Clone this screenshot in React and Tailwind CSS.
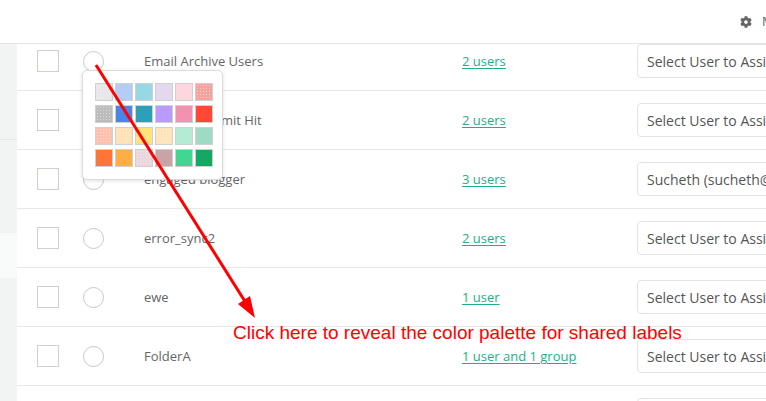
import React from "react";
import { FaCog } from "react-icons/fa";

const dots =
  "bg-[radial-gradient(circle,rgba(255,255,255,0.45)_0.5px,transparent_0.8px)] bg-[length:3px_3px]";

const swatches = [
  "bg-[#e7e7e9]", "bg-[#b3cdf5]", "bg-[#98d7e4]", "bg-[#e4d8f0]", "bg-[#fdd6e0]", "bg-[#f2a59c]",
  "bg-[#bcbcbc]", "bg-[#4a86e8]", "bg-[#2aa1b8]", "bg-[#b99bff]", "bg-[#f690b1]", "bg-[#ff4936]",
  "bg-[#ffc1ad]", "bg-[#ffe1b3]", "bg-[#ffe37c]", "bg-[#ffe4b9]", "bg-[#b3ebd5]", "bg-[#9fdbc3]",
  "bg-[#ff7537]", "bg-[#ffad47]", "bg-[#ebd6de]", "bg-[#c9a4a7]", "bg-[#43d692]", "bg-[#16a765]",
];
const dotted = new Set([0, 5, 6, 12, 13, 15, 20]);

const rows = [
  { label: "Email Archive Users", link: "2 users", select: "Select User to Assign" },
  { label: "Daily Send Limit Hit", link: "2 users", select: "Select User to Assign" },
  { label: "engaged blogger", link: "3 users", select: "Sucheth (sucheth@example.com)" },
  { label: "error_sync2", link: "2 users", select: "Select User to Assign" },
  { label: "ewe", link: "1 user", select: "Select User to Assign" },
  { label: "FolderA", link: "1 user and 1 group", select: "Select User to Assign" },
  { label: "Folder B", link: "1 user", select: "Select User to Assign" },
];

function Row({ r }) {
  return (
    <div className="flex h-[59px] shrink-0 items-center border-b border-[#e8e8e8]">
      <div className="ml-[20px] h-[22px] w-[22px] shrink-0 border border-[#d3cec9] bg-white" />
      <div className="ml-[24px] h-[21px] w-[21px] shrink-0 rounded-full border border-[#c8c8c8] bg-white" />
      <div className="ml-[40px] w-[318px] shrink-0 translate-y-[1px] whitespace-nowrap text-[13px] text-[#666]">
        {r.label}
      </div>
      <div className="w-[175px] shrink-0 translate-y-[1px] whitespace-nowrap text-[13px] text-[#1dae8a] underline underline-offset-2">
        {r.link}
      </div>
      <div className="flex h-[34px] w-[220px] shrink-0 items-center rounded-[4px] border border-[#e3e3e3] bg-white pl-[9px] whitespace-nowrap text-[14px] text-[#555]">
        {r.select}
      </div>
    </div>
  );
}

export default function App() {
  return (
    <div
      className="relative h-[401px] w-[766px] overflow-hidden bg-white"
      style={{ fontFamily: '"Open Sans", "Noto Sans", sans-serif' }}
    >
      <div className="relative z-10 flex h-[44px] items-center overflow-hidden whitespace-nowrap border-b border-[#e6e6e6] bg-white pl-[740px]">
        <FaCog className="h-[12px] w-[12px] shrink-0 text-[#666]" />
        <span className="ml-[10px] text-[13px] text-[#666]">Manage Labels</span>
      </div>

      <div className="-mt-[12px] flex">
        <div className="flex w-[17px] shrink-0 flex-col bg-[#f2f4f4]">
          <div className="h-[108px] shrink-0 border-b border-[#e4e7e7]" />
          <div className="h-[93px] shrink-0" />
          <div className="h-[45px] shrink-0 bg-[#f9fafa]" />
          <div className="h-[200px] shrink-0" />
        </div>
        <div className="flex min-w-0 flex-1 flex-col">
          {rows.map((r, i) => (
            <Row key={i} r={r} />
          ))}
        </div>
      </div>

      {/* color palette popover */}
      <div className="absolute left-[82px] top-[70px] z-20 w-[141px] rounded-[5px] border border-[#dcdcdc] bg-white pb-[12px] pl-[12px] pt-[12px] shadow-[0_1px_4px_rgba(0,0,0,0.12)]">
        <div className="grid grid-cols-[repeat(6,18px)] gap-x-[2px] gap-y-[4px]">
          {swatches.map((c, i) => (
            <div
              key={i}
              className={
                "h-[18px] w-[18px] border border-[#d0d0d0] " +
                c +
                (dotted.has(i) ? " " + dots : "")
              }
            />
          ))}
        </div>
      </div>

      {/* annotation arrow */}
      <svg
        className="pointer-events-none absolute left-0 top-0 z-30"
        width="766"
        height="401"
        viewBox="0 0 766 401"
      >
        <line x1="96" y1="65" x2="246" y2="303" stroke="#ff0000" strokeWidth="3" />
        <polygon points="255,318 250,296 238,304" fill="#ff0000" />
      </svg>

      <div
        className="absolute left-[233px] top-[323px] z-30 whitespace-nowrap text-[19px] leading-[19px] text-[#ff0000]"
        style={{ fontFamily: '"Liberation Sans", Arial, sans-serif' }}
      >
        Click here to reveal the color palette for shared labels
      </div>
    </div>
  );
}
